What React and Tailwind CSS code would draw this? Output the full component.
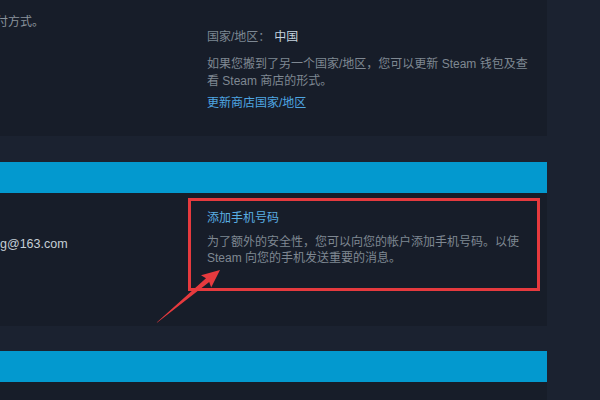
export default function App() {
  const font = { fontFamily: '"Liberation Sans", "Noto Sans CJK SC", sans-serif' };

  return (
    <div className="relative w-[600px] h-[400px] overflow-hidden bg-[#1b2230]" style={font}>
      <div className="w-[547px] flex flex-col">
        {/* country panel */}
        <div className="h-[136px] bg-[#171d29] flex text-[12px] leading-[17px]">
          <div className="w-[207px] pt-[14px] overflow-hidden">
            <div className="ml-[-4px] text-[#8a939c]">付方式。</div>
          </div>
          <div className="w-[330px] pt-[29px]">
            <div className="flex">
              <span className="text-[#7d8893]">国家/地区：</span>
              <span className="ml-[4px] text-[#c6d4df]">中国</span>
            </div>
            <p className="mt-[10px] text-[#7f8892]">
              如果您搬到了另一个国家/地区，您可以更新 Steam 钱包及查
              <br />
              看 Steam 商店的形式。
            </p>
            <a className="block mt-[5px] text-[#4fa6e2]">更新商店国家/地区</a>
          </div>
        </div>

        <div className="mt-[26px] h-[31px] bg-[#0399cf]" />

        {/* contact panel */}
        <div className="h-[133px] bg-[#171d29] flex text-[12px] leading-[17px]">
          <div className="w-[207px] pt-[43px] overflow-hidden">
            <div className="text-[12.5px] text-[#c5ced6]">g@163.com</div>
          </div>
          <div className="w-[330px] pt-[17px]">
            <a className="block text-[#5aaee3]">添加手机号码</a>
            <p className="mt-[7px] text-[#7f8892] leading-[16px]">
              为了额外的安全性，您可以向您的帐户添加手机号码。以使
              <br />
              Steam 向您的手机发送重要的消息。
            </p>
          </div>
        </div>

        <div className="mt-[25px] h-[31px] bg-[#0399cf]" />
        <div className="h-[40px] bg-[#171d29]" />
      </div>

      {/* annotation: red box */}
      <div className="absolute left-[188px] top-[198px] w-[352px] h-[93px] border-[3px] border-[#e63a3e]" />

      {/* annotation: arrow */}
      <svg className="absolute left-0 top-0" width="600" height="400" viewBox="0 0 600 400">
        <polygon
          points="156.7,322.4 206,278.2 201,275.2 220,270 211.2,287.6 209.2,282 157.3,322.6"
          fill="#e63a3e"
        />
      </svg>
    </div>
  );
}
